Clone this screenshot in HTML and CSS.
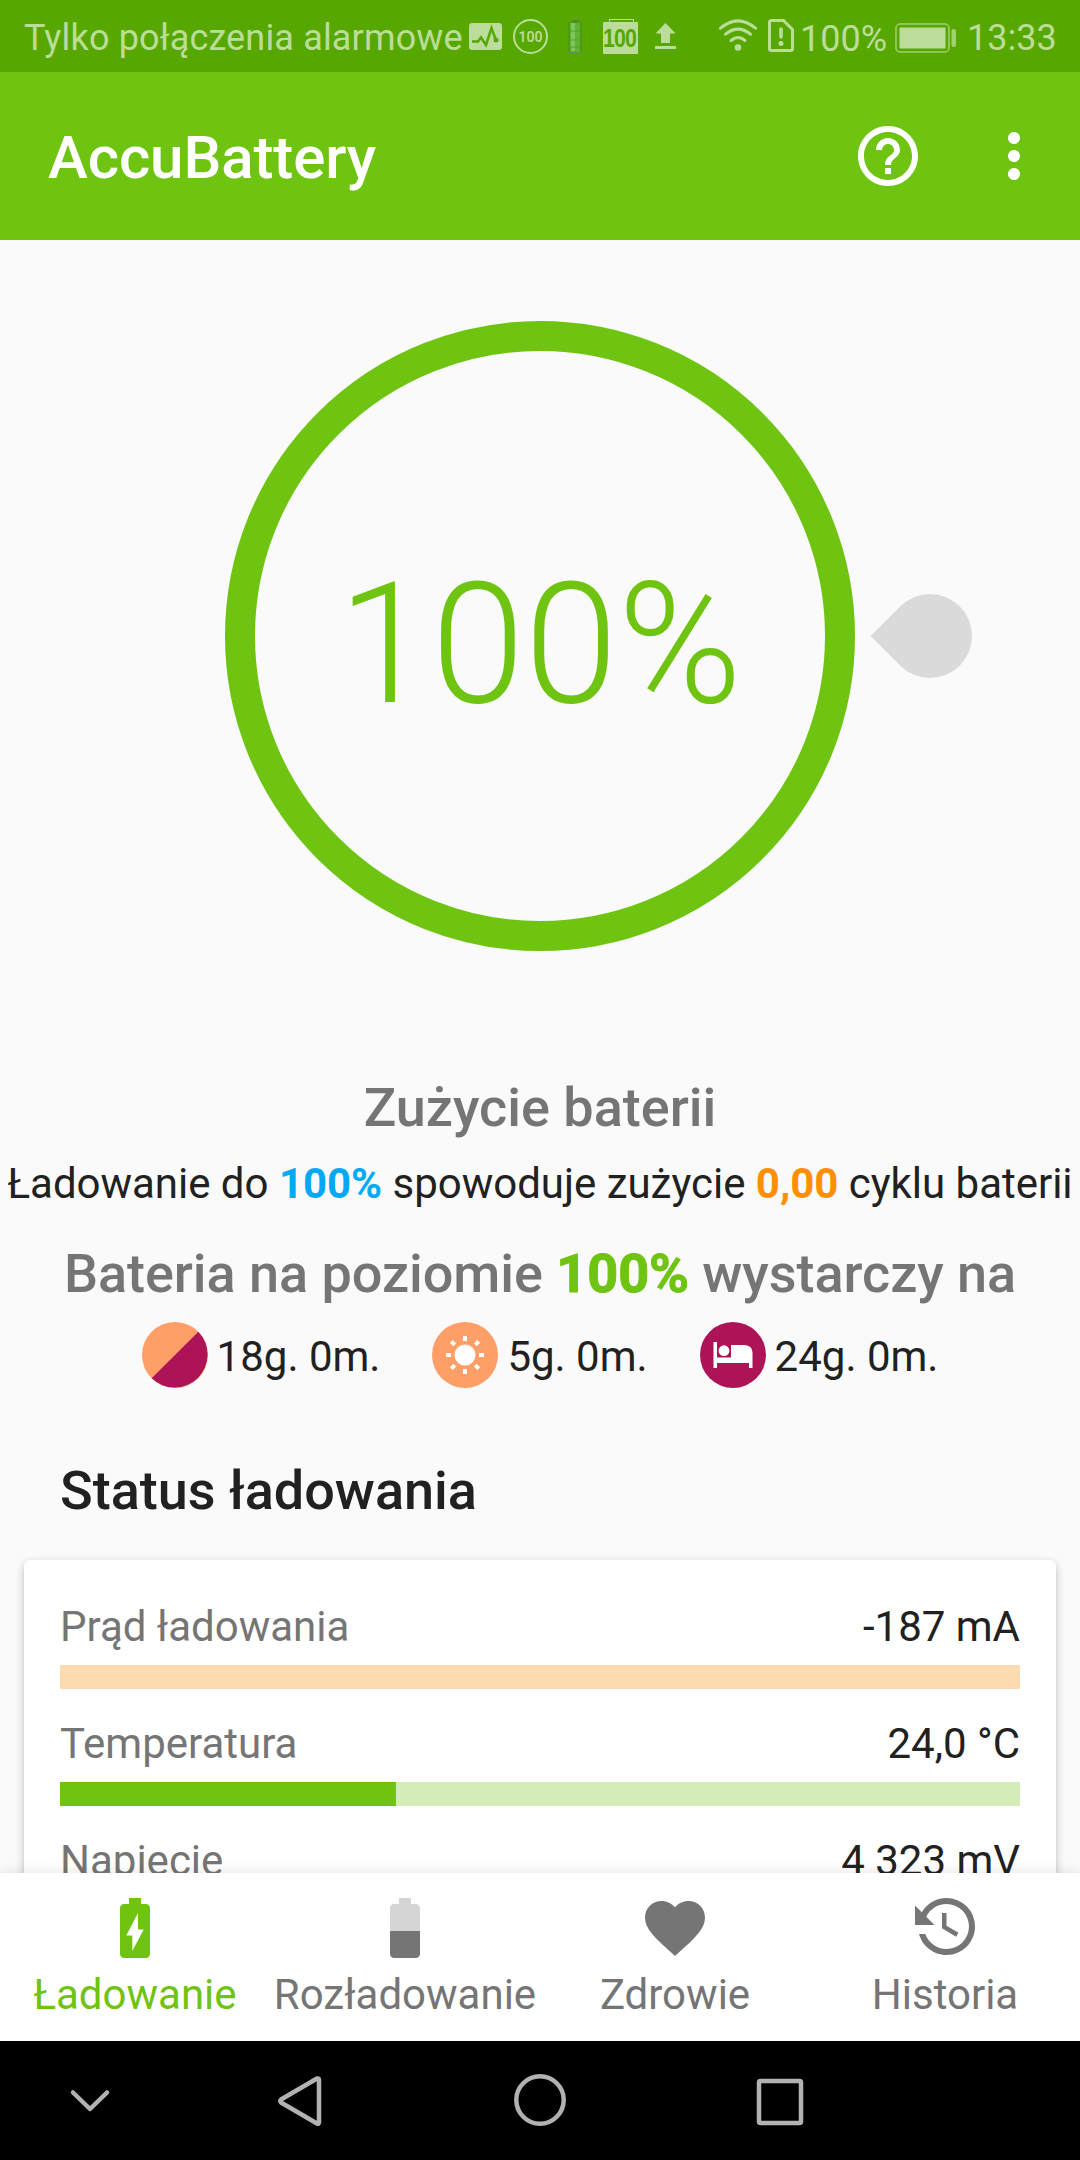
FILE: index.html
```html
<!DOCTYPE html>
<html lang="pl">
<head>
  <meta charset="UTF-8">
  <meta name="viewport" content="width=device-width, initial-scale=1.0">
  <title>AccuBattery</title>
  <link rel="stylesheet" href="styles.css">
</head>
<body>
  <div class="screen">

    <div class="status-bar">
      <span class="carrier">Tylko połączenia alarmowe</span>
      <svg class="icon-monitor" width="33" height="27" viewBox="0 0 33 27">
        <rect width="33" height="27" rx="3" fill="#bbdd99"/>
        <path d="M3 18.500H9L12 14.500L17 22L22.500 5L27 17.500" fill="none" stroke="#56a800" stroke-width="2.500"/>
        <circle cx="27" cy="17" r="2.500" fill="#56a800"/>
      </svg>
      <span class="circle-badge">100</span>
      <svg class="icon-cell" width="16" height="35" viewBox="0 0 16 35">
        <rect x="5" y="1" width="7" height="3" fill="#5f8030"/>
        <rect x="1" y="3" width="14" height="31" rx="1" fill="#4a9a18"/>
        <rect x="3" y="4" width="10" height="29" fill="#5fb232"/>
        <rect x="4" y="4" width="4" height="28" fill="#80c45c"/>
        <path d="M2 12H14M2 21H14M2 28H14" stroke="#53a22a" stroke-width="1"/>
        <path d="M1 33.500H15" stroke="#6a8c50" stroke-width="1.500"/>
      </svg>
      <div class="box-badge"><span>100</span></div>
      <svg class="icon-upload" width="21" height="27" viewBox="0 0 21 27">
        <path d="M10.500 0L20.500 10.500H15V20H6V10.500H0.500ZM0 23H21V26H0Z" fill="#bbdd99"/>
      </svg>
      <svg class="icon-wifi" width="40" height="33" viewBox="0 0 40 33">
        <g fill="none" stroke="#bbdd99" stroke-width="3" stroke-linecap="round">
          <path d="M2.500 9.200Q20 -5.500 37.500 9.200"/>
          <path d="M7.500 15.200Q20 5 32.500 15.200"/>
          <path d="M13 21.500Q20 15.500 27 21.500"/>
        </g>
        <circle cx="20" cy="28.500" r="3.300" fill="#bbdd99"/>
      </svg>
      <svg class="icon-sim" width="26" height="33" viewBox="0 0 26 33">
        <path d="M3.500 1.500H15.500L24.500 10.500V29.500Q24.500 31.500 22.500 31.500H3.500Q1.500 31.500 1.500 29.500V3.500Q1.500 1.500 3.500 1.500Z" fill="none" stroke="#bbdd99" stroke-width="3"/>
        <path d="M13 10V18" stroke="#bbdd99" stroke-width="3.600" stroke-linecap="round"/>
        <circle cx="13" cy="24.500" r="2.500" fill="#bbdd99"/>
      </svg>
      <span class="level">100%</span>
      <svg class="icon-battery" width="62" height="30" viewBox="0 0 62 30">
        <rect x="1" y="1" width="53" height="28" rx="4" fill="none" stroke="#a1d070" stroke-width="1.500"/>
        <rect x="4.500" y="4.500" width="46" height="21" rx="1" fill="#bbdd99"/>
        <rect x="56.500" y="6" width="4.500" height="18" rx="2" fill="#a1d070"/>
      </svg>
      <span class="clock">13:33</span>
    </div>

    <header class="app-bar">
      <h1>AccuBattery</h1>
      <svg class="icon-help" width="72" height="72" viewBox="0 0 24 24">
        <path fill="#fff" d="M11 18h2v-2h-2v2zm1-16C6.480 2 2 6.480 2 12s4.480 10 10 10 10-4.480 10-10S17.520 2 12 2zm0 18c-4.410 0-8-3.590-8-8s3.590-8 8-8 8 3.590 8 8-3.590 8-8 8zm0-14c-2.210 0-4 1.790-4 4h2c0-1.100.9-2 2-2s2 .9 2 2c0 2-3 1.750-3 5h2c0-2.250 3-2.500 3-5 0-2.210-1.790-4-4-4z"/>
      </svg>
      <svg class="icon-more" width="72" height="72" viewBox="0 0 24 24">
        <path fill="#fff" d="M12 8c1.100 0 2-.9 2-2s-.9-2-2-2-2 .9-2 2 .9 2 2 2zm0 2c-1.100 0-2 .9-2 2s.9 2 2 2 2-.9 2-2-.9-2-2-2zm0 6c-1.100 0-2 .9-2 2s.9 2 2 2 2-.9 2-2-.9-2-2-2z"/>
      </svg>
    </header>

    <main>
      <div class="gauge">
        <span class="gauge-value">100%</span>
        <div class="gauge-handle"></div>
      </div>

      <h2 class="wear-title">Zużycie baterii</h2>
      <p class="wear-text">Ładowanie do <b class="blue">100%</b> spowoduje zużycie <b class="orange">0,00</b> cyklu baterii</p>

      <h2 class="runtime-title">Bateria na poziomie <b class="green">100%</b> wystarczy na</h2>
      <div class="runtime">
        <div class="runtime-item">
          <svg width="66" height="66" viewBox="0 0 66 66">
            <circle cx="33" cy="33" r="33" fill="#ff9e66"/>
            <path d="M56.330 9.670A33 33 0 0 1 9.670 56.330Z" fill="#ad1457"/>
          </svg>
          <span>18g. 0m.</span>
        </div>
        <div class="runtime-item">
          <svg width="66" height="66" viewBox="0 0 66 66">
            <circle cx="33" cy="33" r="33" fill="#ff9e66"/>
            <circle cx="33" cy="33" r="10.500" fill="#fff"/>
            <path d="M33 14V19M33 47V52M14 33H19M47 33H52M19.300 19.300L22.800 22.800M43.200 43.200L46.700 46.700M46.700 19.300L43.200 22.800M22.800 43.200L19.300 46.700" stroke="#fff" stroke-width="4"/>
          </svg>
          <span>5g. 0m.</span>
        </div>
        <div class="runtime-item">
          <svg width="66" height="66" viewBox="0 0 66 66">
            <circle cx="33" cy="33" r="33" fill="#ad1457"/>
            <path d="M13.500 20H17V35.500H31V23H44.500Q52.500 23.500 52.500 30.500V46H49V41H17V46H13.500Z" fill="#fff"/>
            <circle cx="24" cy="28.700" r="5.400" fill="#fff"/>
          </svg>
          <span>24g. 0m.</span>
        </div>
      </div>

      <h2 class="status-title">Status ładowania</h2>
      <div class="card">
        <div class="row">
          <span class="label">Prąd ładowania</span>
          <span class="value">-187 mA</span>
        </div>
        <div class="bar bar-orange"></div>

        <div class="row">
          <span class="label">Temperatura</span>
          <span class="value">24,0 °C</span>
        </div>
        <div class="bar bar-green"><div class="fill" style="width: 35%"></div></div>

        <div class="row">
          <span class="label">Napięcie</span>
          <span class="value">4 323 mV</span>
        </div>
        <div class="bar bar-green"></div>
      </div>
    </main>

    <nav class="tabs">
      <a class="tab active">
        <svg width="72" height="72" viewBox="0 0 24 24">
          <path fill="#6fc412" d="M15.670 4H14V2h-4v2H8.330C7.600 4 7 4.600 7 5.330v15.330C7 21.400 7.600 22 8.330 22h7.330c.74 0 1.340-.6 1.340-1.330V5.330C17 4.600 16.400 4 15.670 4z"/>
          <path fill="#fff" d="M11.100 19.700v-5.200H9.100L13 7v5.500h1.900z"/>
        </svg>
        <span>Ładowanie</span>
      </a>
      <a class="tab">
        <svg width="72" height="72" viewBox="0 0 24 24">
          <path fill="#d5d5d5" d="M17 5.330C17 4.600 16.400 4 15.670 4H14V2h-4v2H8.330C7.600 4 7 4.600 7 5.330V13h10V5.330z"/>
          <path fill="#757575" d="M7 13v7.670C7 21.400 7.600 22 8.330 22h7.330c.74 0 1.340-.6 1.340-1.330V13H7z"/>
        </svg>
        <span>Rozładowanie</span>
      </a>
      <a class="tab">
        <svg width="72" height="72" viewBox="0 0 24 24">
          <path fill="#757575" d="M12 21.350l-1.450-1.320C5.400 15.360 2 12.280 2 8.500 2 5.420 4.420 3 7.500 3c1.740 0 3.410.81 4.500 2.090C13.090 3.810 14.760 3 16.500 3 19.580 3 22 5.420 22 8.500c0 3.780-3.400 6.860-8.550 11.540L12 21.350z"/>
        </svg>
        <span>Zdrowie</span>
      </a>
      <a class="tab">
        <svg width="72" height="72" viewBox="0 0 24 24">
          <path fill="#757575" d="M11 7V12.110L15.710 14.900L16.500 13.620L12.500 11.250V7M12.500 2C8.970 2 5.910 3.920 4.270 6.770L2 4.500V11H8.500L5.750 8.250C6.960 5.730 9.500 4 12.500 4A7.500 7.500 0 0 1 20 11.500A7.500 7.500 0 0 1 12.500 19C9.230 19 6.470 16.910 5.440 14H3.340C4.440 18.030 8.110 21 12.500 21C17.740 21 22 16.750 22 11.500A9.500 9.500 0 0 0 12.500 2Z"/>
        </svg>
        <span>Historia</span>
      </a>
    </nav>

    <div class="nav-bar">
      <svg width="240" height="119" viewBox="0 0 240 119">
        <path d="M73 51.500L90 68L107 51.500"/>
      </svg>
      <svg width="180" height="119" viewBox="240 0 180 119">
        <path d="M317 37.500Q319 37 319 39V81Q319 83.500 317 82.500L281 61.500Q279.500 60 281 58.500Z"/>
      </svg>
      <svg width="240" height="119" viewBox="420 0 240 119">
        <circle cx="540" cy="59" r="23.700"/>
      </svg>
      <svg width="240" height="119" viewBox="660 0 240 119">
        <rect x="759" y="40" width="42" height="42" rx="1.500"/>
      </svg>
    </div>

  </div>
</body>
</html>
```
FILE: styles.css
```css
/* Reset some default styles */
body, h1, h2, p {
    margin: 0;
    padding: 0;
}

* {
    box-sizing: border-box;
}

body {
    font-family: Roboto, sans-serif;
    background: #fafafa;
    color: #212121;
}

svg {
    display: block;
    flex-shrink: 0;
}

.screen {
    width: 1080px;
    height: 2160px;
    display: flex;
    flex-direction: column;
    overflow: hidden;
}

/* Android status bar */
.status-bar {
    height: 72px;
    flex-shrink: 0;
    display: flex;
    align-items: flex-start;
    padding-left: 24px;
    background: #56a800;
    color: #bbdd99;
    font-size: 36px;
    line-height: 42px;
    white-space: nowrap;
}

.carrier {
    width: 445px;
    margin-top: 17px;
    letter-spacing: 0.16px;
}

.icon-monitor {
    margin-top: 23px;
}

.circle-badge {
    width: 35px;
    height: 35px;
    margin: 19px 0 0 11px;
    border: 2px solid #bbdd99;
    border-radius: 50%;
    font-size: 14px;
    font-weight: 600;
    line-height: 32px;
    text-align: center;
}

.icon-cell {
    margin: 19px 0 0 19px;
}

.box-badge {
    position: relative;
    width: 35px;
    height: 32px;
    margin: 22px 0 0 20px;
    border-radius: 1px;
    background: #bbdd99;
    color: #56a800;
    font-family: "Liberation Sans", sans-serif;
    font-size: 26px;
    font-weight: bold;
    letter-spacing: -1px;
    line-height: 33px;
}

.box-badge span {
    display: block;
    transform: scaleX(0.82);
    transform-origin: left;
}

/* little battery cap above the box */
.box-badge::before {
    content: "";
    position: absolute;
    left: 6px;
    top: -3px;
    width: 23px;
    height: 3px;
    border: 1px solid #bbdd99;
    border-bottom: none;
}

.icon-upload {
    margin: 23px 0 0 17px;
}

.icon-wifi {
    margin: 19px 0 0 42px;
}

.icon-sim {
    margin: 19px 0 0 10px;
}

.level {
    width: 95px;
    margin: 18px 0 0 6px;
}

.icon-battery {
    margin: 23px 0 0 0;
}

.clock {
    margin: 17px 0 0 10px;
}

/* App bar */
.app-bar {
    height: 168px;
    flex-shrink: 0;
    display: flex;
    align-items: center;
    padding: 0 30px 0 48px;
    background: #6fc412;
}

.app-bar h1 {
    flex: 1;
    color: #fff;
    font-size: 60px;
    font-weight: 500;
    letter-spacing: -0.1px;
    line-height: 70px;
    padding-top: 3px;
}

.icon-more {
    margin: 0 0 0 54px;
}

/* Main content, cut off by the tabs */
main {
    flex: 1;
    min-height: 0;
    overflow: hidden;
}

.gauge {
    position: relative;
    width: 630px;
    height: 630px;
    margin: 81px auto 0;
    border: 30px solid #6fc412;
    border-radius: 50%;
    display: flex;
    align-items: center;
    justify-content: center;
}

.gauge-value {
    color: #6fc412;
    font-size: 168px;
    font-weight: 300;
    line-height: 196px;
    padding-top: 17px;
}

/* drop shape pointing at the ring */
.gauge-handle {
    position: absolute;
    left: 633px;
    top: 243px;
    width: 84px;
    height: 84px;
    background: #dadada;
    border-radius: 50% 50% 50% 0;
    transform: rotate(45deg);
}

h2 {
    font-size: 54px;
    font-weight: 500;
    line-height: 64px;
    white-space: nowrap;
}

.wear-title, .runtime-title {
    color: #757575;
    text-align: center;
}

.wear-title {
    margin-top: 125px;
}

.wear-text {
    margin-top: 19px;
    font-size: 42px;
    letter-spacing: -0.02px;
    line-height: 50px;
    text-align: center;
    white-space: nowrap;
}

.runtime-title {
    margin-top: 33px;
    letter-spacing: -0.05px;
}

.blue {
    color: #03a9f4;
}

.orange {
    color: #ff8f00;
}

.green {
    color: #6fc412;
    -webkit-text-stroke: 1px #6fc412;
}

.runtime {
    display: flex;
    justify-content: center;
    gap: 52px;
    margin-top: 16px;
}

.runtime-item {
    display: flex;
    align-items: center;
    gap: 9px;
    height: 66px;
    font-size: 42px;
    line-height: 50px;
}

.runtime-item span {
    padding-top: 3px;
}

.status-title {
    margin: 71px 0 0 60px;
}

.card {
    margin: 37px 24px 0;
    padding: 42px 36px;
    background: #fff;
    border-radius: 6px;
    box-shadow: 0 3px 8px rgba(0, 0, 0, 0.25);
}

.row {
    display: flex;
    justify-content: space-between;
    font-size: 42px;
    line-height: 50px;
}

.label {
    color: #757575;
}

.bar {
    height: 24px;
    margin: 13px 0 30px;
}

.bar-orange {
    background: #fddbb0;
}

.bar-green {
    background: #d4edb8;
}

.fill {
    height: 100%;
    background: #6fc412;
}

/* Bottom tabs */
.tabs {
    position: relative;
    height: 168px;
    flex-shrink: 0;
    display: flex;
    background: #fff;
    box-shadow: 0 0 12px rgba(0, 0, 0, 0.12);
}

.tab {
    flex: 1;
    display: flex;
    flex-direction: column;
    align-items: center;
    padding-top: 19px;
    color: #757575;
    font-size: 42px;
    line-height: 50px;
}

.tab span {
    margin-top: 6px;
}

.tab.active {
    color: #6fc412;
}

/* System navigation */
.nav-bar {
    position: relative;
    height: 119px;
    flex-shrink: 0;
    display: flex;
    background: #000;
}

.nav-bar svg {
    fill: none;
    stroke: #b2b2b2;
    stroke-width: 4.5;
    stroke-linecap: round;
    stroke-linejoin: round;
}
```
